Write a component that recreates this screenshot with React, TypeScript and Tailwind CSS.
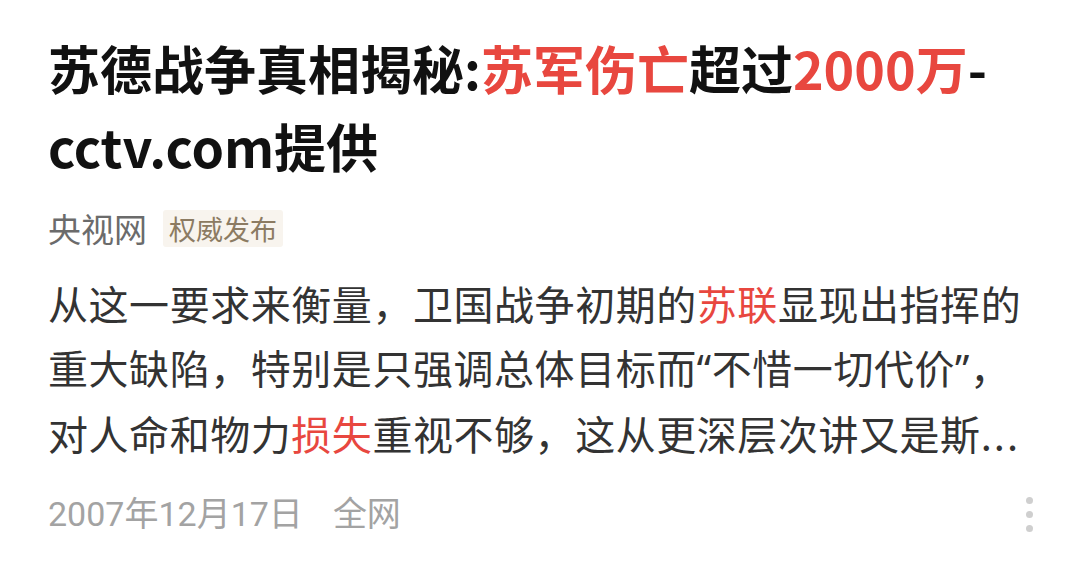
import React from "react";

const FONT = "font-['Noto_Sans_CJK_SC','Noto_Sans',sans-serif]";

function Red({ children }: { children: React.ReactNode }) {
  return <span className="text-[#e8473f]">{children}</span>;
}

// Latin-width curly quotes, narrower than the full-width CJK forms
function Q({ children }: { children: React.ReactNode }) {
  return <span className="font-['Noto_Sans',sans-serif]">{children}</span>;
}

function MoreDots() {
  return (
    <div className="flex flex-col items-center gap-[7px] pt-[1px]">
      <span className="block h-[7px] w-[7px] rounded-full bg-[#cfcfcf]" />
      <span className="block h-[7px] w-[7px] rounded-full bg-[#cfcfcf]" />
      <span className="block h-[7px] w-[7px] rounded-full bg-[#cfcfcf]" />
    </div>
  );
}

export default function App() {
  return (
    <div lang="zh-CN" className={`${FONT} h-[565px] w-[1080px] overflow-hidden bg-white`}>
      <article className="flex flex-col pl-[48px] pr-[46px] pt-[29px]">
        <h1 className="text-[52px] font-bold leading-[78px] text-[#111111]">
          苏德战争真相揭秘:<Red>苏军伤亡</Red>超过<Red>2000万</Red>-cctv.com提供
        </h1>

        <div className="mt-[25px] flex h-[37px] items-center gap-[16px]">
          <span className="text-[33px] leading-none text-[#6b6b6b]">央视网</span>
          <span className="flex h-[37px] items-center rounded-[3px] bg-[#f8f4ee] px-[6px] text-[27px] leading-none text-[#8c7b62]">
            权威发布
          </span>
        </div>

        <p className="mt-[24px] whitespace-nowrap text-[40px] leading-[64px] tracking-[0.55px] text-[#333333]">
          从这一要求来衡量，卫国战争初期的<Red>苏联</Red>显现出指挥的
          <br />
          重大缺陷，特别是只强调总体目标而<Q>“</Q>不惜一切代价<Q>”</Q>，
          <br />
          对人命和物力<Red>损失</Red>重视不够，这从更深层次讲又是斯
          <span className="tracking-[2px]">...</span>
        </p>

        <div className="mt-[29px] flex h-[40px] items-center justify-between">
          <div className="flex items-center gap-[30px] font-['Roboto','Noto_Sans_CJK_SC',sans-serif] text-[34px] leading-none text-[#a3a3a3]">
            <span>2007年12月17日</span>
            <span>全网</span>
          </div>
          <div className="pr-[1px]">
            <MoreDots />
          </div>
        </div>
      </article>
    </div>
  );
}
